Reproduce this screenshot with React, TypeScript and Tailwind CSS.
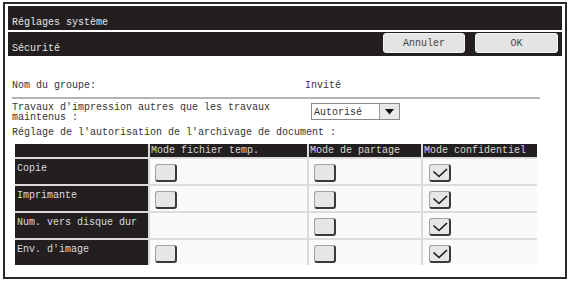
import React from "react";

function Check({ checked }: { checked?: boolean }) {
  return (
    <div className="w-[22px] h-[18px] rounded-[3px] bg-[#e6e6e6] border border-[#a0a0a0] border-r-2 border-b-2 border-r-[#3a3a3a] border-b-[#3a3a3a] relative">
      {checked && (
        <svg className="absolute left-0 top-0" width="20" height="16" viewBox="0 0 20 16">
          <path d="M3.5 6.5 L9 11.5 L17 4" fill="none" stroke="#1a1a1a" strokeWidth="1.6" />
        </svg>
      )}
    </div>
  );
}

const rows: { label: string; c: [boolean | null, boolean, boolean] }[] = [
  { label: "Copie", c: [false, false, true] },
  { label: "Imprimante", c: [false, false, true] },
  { label: "Num. vers disque dur", c: [null, false, true] },
  { label: "Env. d'image", c: [false, false, true] },
];

export default function App() {
  return (
    <div className="w-[570px] h-[281px] bg-white pt-[2px] px-[3px] pb-[2px] font-['Liberation_Mono',monospace] text-[10px] leading-[12px] text-[#333]">
      <div className="h-full border-2 border-[#2a2a2a] px-[3px] pt-[2px] flex flex-col">
        <div className="h-[24px] shrink-0 bg-[#231f20] text-[#e4e4e4] pl-[4px] pt-[11px]">Réglages système</div>
        <div className="mt-[2px] h-[24px] shrink-0 bg-[#231f20] flex items-start justify-between pl-[4px]">
          <span className="pt-[11px] text-[#e4e4e4]">Sécurité</span>
          <div className="flex gap-[10px] pt-[1px] pr-[4px]">
            <div className="w-[82px] h-[20px] rounded-[3px] bg-[#e4e4e4] border border-[#f4f4f4] flex items-center justify-center pt-[2px] text-[#444]">Annuler</div>
            <div className="w-[83px] h-[20px] rounded-[3px] bg-[#e4e4e4] border border-[#f4f4f4] flex items-center justify-center pt-[2px] text-[#444]">OK</div>
          </div>
        </div>

        <div className="pl-[4px] pr-[22px] mt-[24px]">
          <div className="flex">
            <span className="w-[293px] shrink-0">Nom du groupe:</span>
            <span>Invité</span>
          </div>
          <div className="mt-[5px] h-[2px] bg-[#b4b4b4]" />
          <div className="flex mt-[4px]">
            <div className="w-[299px] shrink-0 leading-[10px]">
              Travaux d'impression autres que les travaux
              <br />
              maintenus :
            </div>
            <div className="w-[89px] h-[17px] border border-[#8a8a8a] bg-white flex">
              <span className="flex-1 pl-[2px] pt-[3px]">Autorisé</span>
              <div className="w-[20px] h-full bg-[#e8e8e8] border-l border-[#9a9a9a] flex items-center justify-center">
                <svg width="9" height="6" viewBox="0 0 9 6">
                  <path d="M0 0 H9 L4.5 5.5 Z" fill="#111" />
                </svg>
              </div>
            </div>
          </div>
          <div className="mt-[4px]">Réglage de l'autorisation de l'archivage de document :</div>
        </div>

        <div className="ml-[7px] mt-[5px] w-[522px] grid grid-cols-[133px_157px_112px_114px] grid-rows-[13px_25px_25px_25px_25px] gap-[2px] bg-[#dcdcdc]">
          <div className="bg-[#231f20]" />
          <div className="bg-[#231f20] text-[#d8d8d8] pl-[1px] pt-[1px] overflow-hidden whitespace-nowrap">Mode fichier temp.</div>
          <div className="bg-[#231f20] text-[#d8d8d8] pl-[1px] pt-[1px] overflow-hidden whitespace-nowrap">Mode de partage</div>
          <div className="bg-[#231f20] text-[#d8d8d8] pl-[1px] pt-[1px] overflow-hidden whitespace-nowrap">Mode confidentiel</div>
          {rows.map((r) => (
            <React.Fragment key={r.label}>
              <div className="bg-[#231f20] text-[#dcdcdc] pl-[2px] pt-[4px] whitespace-nowrap">{r.label}</div>
              {r.c.map((v, i) => (
                <div key={i} className={`bg-[#fafafa] pt-[5px] ${i === 2 ? "pl-[6px]" : "pl-[5px]"}`}>
                  {v !== null && <Check checked={v} />}
                </div>
              ))}
            </React.Fragment>
          ))}
        </div>
      </div>
    </div>
  );
}
